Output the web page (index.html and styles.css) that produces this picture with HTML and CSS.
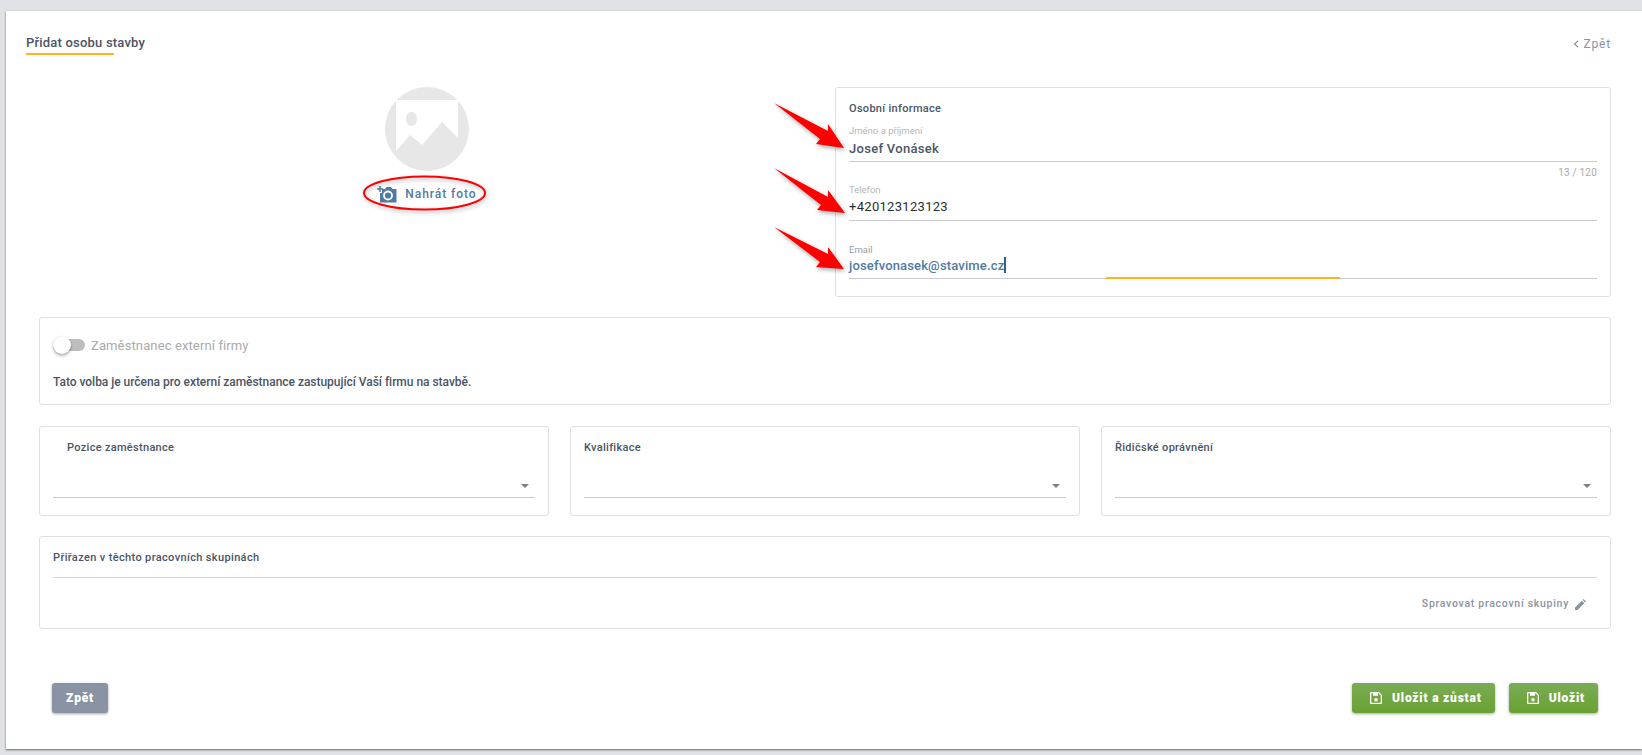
FILE: index.html
```html
<!DOCTYPE html>
<html lang="cs">
<head>
<meta charset="utf-8">
<title>Přidat osobu stavby</title>
<link rel="stylesheet" href="styles.css">
</head>
<body>
<main class="card">
  <header class="head">
    <h1 class="title">Přidat osobu stavby</h1>
    <a class="back-link"><svg class="chev" viewBox="0 0 6 8"><path d="M5 1 1.500 4 5 7" fill="none" stroke="#8a93a3" stroke-width="1.200"/></svg>Zpět</a>
  </header>
  <div class="content">
    <section class="top">
      <div class="photo">
        <svg class="avatar" viewBox="0 0 84 84">
          <circle cx="42" cy="42" r="42" fill="#e8e7e8"/>
          <path d="M11 13H73V51L57 35 37 58 25 48 11 64Z" fill="#fff"/>
          <ellipse cx="26.500" cy="32" rx="5.500" ry="7" fill="#e8e7e8"/>
        </svg>
        <div class="upload">
          <svg class="cam" viewBox="0 0 20 17">
            <path d="M5 3H8L9.500 1H14L15.500 3H19.500V16.500H3V7H5Z" fill="#4f7ba3"/>
            <circle cx="11" cy="9.500" r="4" fill="#4f7ba3" stroke="#fff" stroke-width="1.800"/>
            <path d="M0 3H6M3 0V6" stroke="#4f7ba3" stroke-width="1.500"/>
          </svg>
          <span>Nahrát foto</span>
        </div>
      </div>
      <div class="box personal">
        <h2 class="box-title">Osobní informace</h2>
        <div class="field f-name">
          <label class="f-label">Jméno a příjmení</label>
          <div class="f-value v-name">Josef Vonásek</div>
        </div>
        <div class="counter">13 / 120</div>
        <div class="field f-phone">
          <label class="f-label">Telefon</label>
          <div class="f-value">+420123123123</div>
        </div>
        <div class="field f-mail">
          <label class="f-label l-active">Email</label>
          <div class="f-value v-mail">josefvonasek@stavime.cz<span class="caret"></span></div>
          <span class="focus-bar"></span>
        </div>
      </div>
    </section>
    <section class="box external">
      <div class="toggle-row">
        <span class="toggle"><span class="knob"></span></span>
        <span class="toggle-label">Zaměstnanec externí firmy</span>
      </div>
      <p class="note">Tato volba je určena pro externí zaměstnance zastupující Vaší firmu na stavbě.</p>
    </section>
    <section class="selects">
      <div class="box sel">
        <h2 class="box-title indent">Pozice zaměstnance</h2>
        <div class="sel-line"><span class="arrow"></span></div>
      </div>
      <div class="box sel">
        <h2 class="box-title">Kvalifikace</h2>
        <div class="sel-line"><span class="arrow"></span></div>
      </div>
      <div class="box sel">
        <h2 class="box-title">Řidičské oprávnění</h2>
        <div class="sel-line"><span class="arrow"></span></div>
      </div>
    </section>
    <section class="box groups">
      <h2 class="box-title">Přiřazen v těchto pracovních skupinách</h2>
      <div class="groups-line"></div>
      <a class="manage">Spravovat pracovní skupiny
        <svg class="pencil" viewBox="0 0 12 12"><path d="M0 12V9.300L7.500 1.800 10.200 4.500 2.700 12ZM8.300 1 9.300 0 12 2.700 11 3.700Z" fill="#8a93a3"/></svg>
      </a>
    </section>
    <footer class="actions">
      <button class="btn btn-grey">Zpět</button>
      <div class="actions-right">
        <button class="btn btn-green">
          <svg class="save" viewBox="0 0 12 12"><path fill-rule="evenodd" d="M1 0H9L12 3V11A1 1 0 0 1 11 12H1A1 1 0 0 1 0 11V1A1 1 0 0 1 1 0ZM1.300 1.300V10.700H10.700V3.500L8.700 1.300H8V3.800H3V1.300ZM6 6A1.800 1.800 0 1 0 6 9.600 1.800 1.800 0 1 0 6 6Z" fill="#fff"/></svg>
          Uložit a zůstat
        </button>
        <button class="btn btn-green">
          <svg class="save" viewBox="0 0 12 12"><path fill-rule="evenodd" d="M1 0H9L12 3V11A1 1 0 0 1 11 12H1A1 1 0 0 1 0 11V1A1 1 0 0 1 1 0ZM1.300 1.300V10.700H10.700V3.500L8.700 1.300H8V3.800H3V1.300ZM6 6A1.800 1.800 0 1 0 6 9.600 1.800 1.800 0 1 0 6 6Z" fill="#fff"/></svg>
          Uložit
        </button>
      </div>
    </footer>
  </div>
</main>
<svg class="annot" viewBox="0 0 1642 755" aria-hidden="true">
  <path d="M774 103 828 131 828 124 844 148 816 144 820 139Z"/>
  <path d="M774 168 828 197 828 190 845 213 817 210 821 205Z"/>
  <path d="M774 227 828 254 828 247 844 269 816 267 820 262Z"/>
  <ellipse cx="424.500" cy="193" rx="60.500" ry="16.500"/>
</svg>
</body>
</html>
```
FILE: styles.css
```css
* { box-sizing: border-box; }
html, body { margin: 0; height: 755px; overflow: hidden; }
body {
  background: #e0e2e6;
  padding: 11px 0 6px 6px;
  font-family: Roboto, "Liberation Sans", sans-serif;
  color: #4a5564;
}
.card {
  height: 738px;
  background: #fff;
  box-shadow: 0 1px 2px rgba(0,0,0,.55);
  padding: 0 31px 0 20px;
}
.head {
  height: 76px;
  display: flex;
  justify-content: space-between;
  align-items: flex-start;
  padding-top: 24px;
}
.title {
  margin: 0;
  width: 118px;
  height: 19px;
  font-size: 13px;
  font-weight: 500;
  line-height: 16px;
  letter-spacing: .2px;
  white-space: nowrap;
  position: relative;
}
.title::after {
  content: "";
  position: absolute;
  left: 0;
  bottom: -1px;
  width: 88px;
  height: 2px;
  background: #fbb423;
}
.back-link {
  display: flex;
  align-items: center;
  gap: 5px;
  margin-top: 1px;
  font-size: 12px;
  line-height: 16px;
  color: #8a93a3;
  letter-spacing: .8px;
}
.chev { width: 6px; height: 8px; }
.content { margin-left: 13px; }
.top {
  display: grid;
  grid-template-columns: 776px 776px;
  column-gap: 20px;
  height: 210px;
}
.photo {
  display: flex;
  flex-direction: column;
  align-items: center;
}
.avatar { width: 84px; height: 84px; display: block; }
.upload {
  display: flex;
  align-items: center;
  gap: 8px;
  margin-top: 13px;
  height: 20px;
  font-size: 12px;
  font-weight: 500;
  letter-spacing: .95px;
  color: #4f7ba3;
}
.cam { width: 20px; height: 17px; display: block; }
.box {
  border: 1px solid #dfe0e2;
  border-radius: 3px;
  background: #fff;
}
.box-title {
  margin: 0;
  font-size: 11px;
  font-weight: 500;
  line-height: 14px;
  letter-spacing: .3px;
  color: #4a5564;
}
.indent { padding-left: 14px; }
.personal {
  padding: 14px 13px 0;
  position: relative;
}
.field {
  position: relative;
  border-bottom: 1px solid #c8c9cb;
}
.f-label {
  display: block;
  font-size: 9.500px;
  line-height: 12px;
  color: #b5b6b8;
}
.l-active { color: #9a9da2; }
.f-value {
  font-size: 13px;
  line-height: 18px;
  letter-spacing: .3px;
  color: #2b2f33;
}
.v-name { font-weight: 500; color: #4a5564; }
.v-mail { font-weight: 500; color: #4f7ba3; letter-spacing: .15px; }
.caret {
  display: inline-block;
  width: 1.500px;
  height: 16px;
  background: #2f5f8f;
  vertical-align: -3px;
}
.f-name { margin-top: 9px; height: 37px; }
.f-name .f-value { margin-top: 3px; }
.counter {
  height: 14px;
  margin-top: 4px;
  text-align: right;
  font-size: 10px;
  line-height: 14px;
  color: #a8a9ab;
  letter-spacing: .2px;
}
.f-phone { height: 41px; padding-top: 4px; }
.f-phone .f-value { margin-top: 2px; }
.f-mail { height: 46px; margin-top: 12px; padding-top: 11px; }
.f-mail .f-value { margin-top: 1px; }
.focus-bar {
  position: absolute;
  left: 257px;
  bottom: -1px;
  width: 234px;
  height: 2px;
  background: #fbb423;
}
.external {
  margin-top: 20px;
  height: 88px;
  padding: 13px 13px 0;
}
.toggle-row {
  display: flex;
  align-items: center;
  gap: 6px;
  height: 24px;
  margin-top: 2px;
}
.toggle {
  position: relative;
  display: block;
  width: 32px;
  height: 12px;
  border-radius: 6px;
  background: #bdbdbd;
}
.knob {
  position: absolute;
  left: 0;
  top: -3px;
  width: 18px;
  height: 18px;
  border-radius: 50%;
  background: #fff;
  box-shadow: 0 2px 3px rgba(0,0,0,.3), 0 0 1px rgba(0,0,0,.2);
}
.toggle-label {
  font-size: 13px;
  color: #a9aaac;
  letter-spacing: .12px;
}
.note {
  margin: 17px 0 0;
  font-size: 12px;
  font-weight: 500;
  line-height: 16px;
  letter-spacing: -.03px;
  color: #4a5564;
}
.selects {
  display: grid;
  grid-template-columns: repeat(3, 1fr);
  column-gap: 21px;
  margin-top: 21px;
}
.sel { height: 90px; padding: 14px 13px 0; }
.sel-line {
  position: relative;
  height: 37px;
  margin-top: 6px;
  border-bottom: 1px solid #c8c9cb;
}
.arrow {
  position: absolute;
  right: 6px;
  top: 23px;
  border-left: 4px solid transparent;
  border-right: 4px solid transparent;
  border-top: 4px solid #7d7f82;
}
.groups {
  margin-top: 20px;
  height: 93px;
  padding: 14px 13px 0;
}
.groups .box-title { letter-spacing: .36px; }
.groups-line {
  margin-top: 12px;
  border-bottom: 1px solid #d3d4d6;
}
.manage {
  display: flex;
  justify-content: flex-end;
  align-items: center;
  gap: 6px;
  margin: 19px 11px 0 0;
  font-size: 10.500px;
  font-weight: 500;
  line-height: 14px;
  letter-spacing: .72px;
  color: #8a93a3;
}
.pencil { width: 11px; height: 11px; }
.actions {
  display: flex;
  justify-content: space-between;
  margin: 54px 13px 0 13px;
}
.actions-right { display: flex; gap: 14px; }
.btn {
  display: flex;
  align-items: center;
  justify-content: center;
  gap: 10px;
  height: 30px;
  border: 0;
  border-radius: 3px;
  font-family: Roboto, "Liberation Sans", sans-serif;
  font-size: 12px;
  font-weight: 900;
  letter-spacing: .8px;
  color: #fff;
  padding: 0 13px 0 18px;
  box-shadow: 0 1px 3px rgba(0,0,0,.35);
}
.btn-grey { width: 56px; padding: 0; background: #8a93a3; }
.btn-green { background: linear-gradient(#7bab55, #68a232); }
.save { width: 12px; height: 12px; }
.annot {
  position: absolute;
  left: 0;
  top: 0;
  width: 1642px;
  height: 755px;
  pointer-events: none;
}
.annot path { fill: #f00; filter: drop-shadow(1px 2px 2px rgba(0,0,0,.35)); }
.annot ellipse { fill: none; stroke: #f00; stroke-width: 2; filter: drop-shadow(1px 2px 2px rgba(0,0,0,.3)); }
```
